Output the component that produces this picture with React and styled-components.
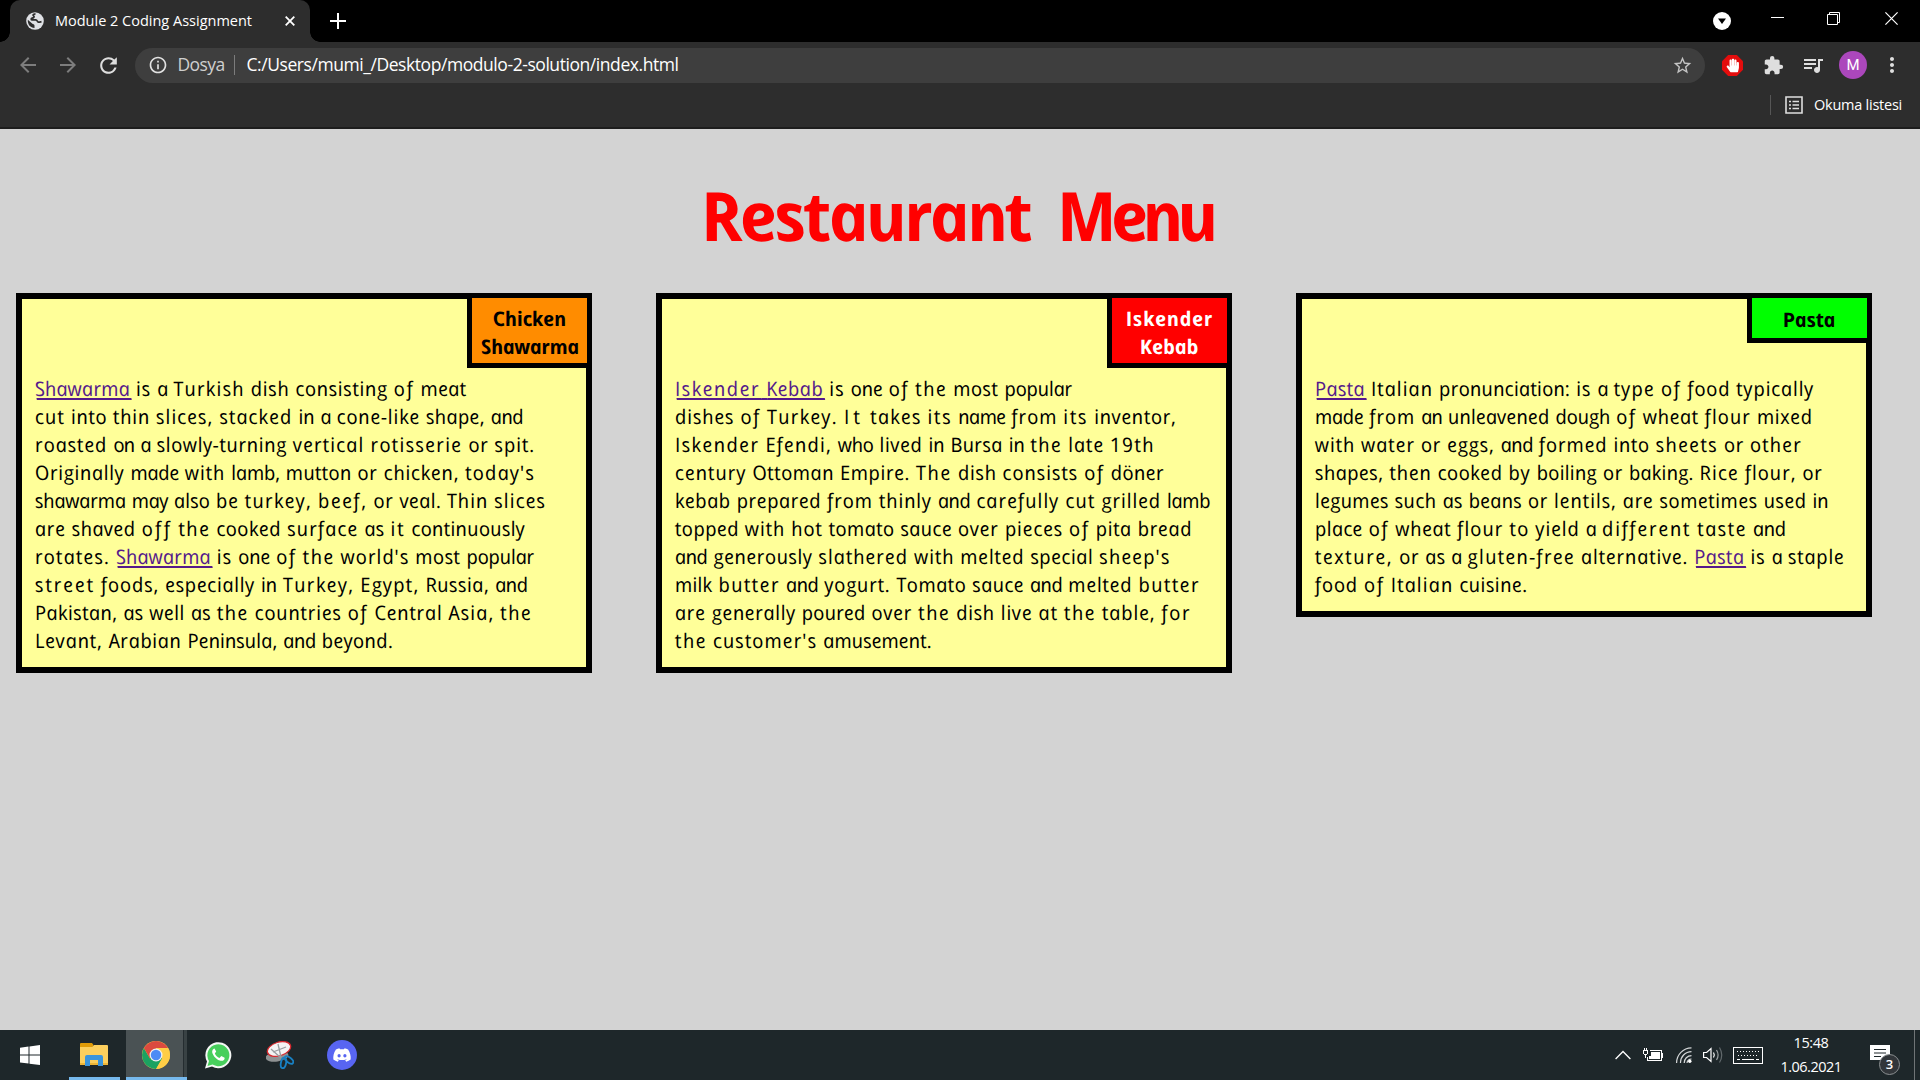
import React from "react";
import styled, { createGlobalStyle } from "styled-components";
import {
  MdArrowBack, MdArrowForward, MdRefresh, MdInfoOutline, MdStarBorder,
  MdExtension, MdQueueMusic, MdMoreVert,
} from "react-icons/md";
import { FaDiscord, FaHandPaper } from "react-icons/fa";

const HAND = '"Open Sans", "Noto Sans", sans-serif';
const UI = '"Open Sans", "Noto Sans", sans-serif';

const Global = createGlobalStyle`
  * { box-sizing: border-box; }
  html, body { margin: 0; background: #d3d3d3; }
  body { overflow: hidden; }
`;

/* Letter advances of the casual hand lettering, in 1/2048 em. */
const ADVANCE = {
  a: 1050, b: 1215, c: 1053, d: 1204, e: 1122, f: 1040, g: 1086, h: 1182, i: 575, j: 824,
  k: 1104, l: 562, m: 1588, n: 1071, o: 1079, p: 1094, q: 1065, r: 984, s: 997, t: 966,
  u: 1065, v: 996, w: 1398, x: 1210, y: 1066, z: 1104, " ": 612, "ö": 1079,
  A: 1498, B: 1290, C: 1234, D: 1478, E: 1277, I: 1119, K: 1249, L: 1128, M: 1809,
  O: 1635, P: 1067, R: 1287, S: 1421, T: 1392, ",": 567, ".": 510, "'": 795, "-": 853,
  ":": 735, 1: 1249, 9: 1249,
};
const advance = (text) => [...text].reduce((sum, ch) => sum + (ADVANCE[ch] || 1100), 0);

const ctx = document.createElement("canvas").getContext("2d");
const spacingFor = (text, width, font) => {
  ctx.font = font;
  return (width - ctx.measureText(text).width) / text.length;
};

/* ---------- Browser chrome ---------- */
const Screen = styled.div`
  width: 1920px;
  height: 1080px;
  display: flex;
  flex-direction: column;
  overflow: hidden;
  background: #d3d3d3;
  font-family: ${UI};
`;
const TabStrip = styled.div`
  height: 42px;
  flex: none;
  display: flex;
  background: #000;
  padding-left: 10px;
  color: #fff;
`;
const Tab = styled.div`
  width: 300px;
  height: 42px;
  display: flex;
  align-items: center;
  padding: 0 14px 0 16px;
  background: #2d2d2d;
  border-radius: 10px 10px 0 0;
  position: relative;
  &::before, &::after {
    content: "";
    position: absolute;
    bottom: 0;
    width: 10px;
    height: 10px;
  }
  &::before { left: -10px; background: radial-gradient(circle at 0 0, #000 9.5px, #2d2d2d 10px); }
  &::after { right: -10px; background: radial-gradient(circle at 100% 0, #000 9.5px, #2d2d2d 10px); }
`;
const Spacer = styled.div`
  flex: ${(p) => (p.$w ? `0 0 ${p.$w}px` : "1")};
`;
const Label = styled.span`
  flex: none;
  display: block;
  width: ${(p) => p.$w}px;
  font-size: ${(p) => p.$size}px;
  line-height: 1.36;
  color: ${(p) => p.$color || "#fff"};
  white-space: pre;
`;
const Glyph = styled.span`
  flex: none;
  display: flex;
  align-items: center;
  justify-content: center;
  width: ${(p) => p.$w}px;
  height: ${(p) => p.$h || p.$w}px;
  color: ${(p) => p.$color || "#fff"};
  margin-left: ${(p) => p.$ml || 0}px;
  svg { display: block; flex: none; }
`;
const WindowButtons = styled.div`
  display: flex;
  align-items: flex-start;
  padding: 12px 22px 0 0;
`;
const Toolbar = styled.div`
  height: 46px;
  flex: none;
  display: flex;
  align-items: center;
  background: #2d2d2d;
  padding: 0 17px 0 16px;
`;
const AddressBar = styled.div`
  flex: 0 0 1570px;
  height: 35px;
  display: flex;
  align-items: center;
  padding: 0 13px;
  border-radius: 18px;
  background: #3e3e3e;
  margin-left: 15px;
`;
const Divider = styled.i`
  width: 1px;
  height: 20px;
  background: ${(p) => p.$color || "#7c7c7c"};
`;
const Avatar = styled.span`
  flex: none;
  width: 28px;
  height: 28px;
  margin-left: 14px;
  border-radius: 50%;
  background: #ab47bc;
  color: #fff;
  display: grid;
  place-items: center;
  font: 15px Roboto, sans-serif;
`;
const Bookmarks = styled.div`
  height: 41px;
  flex: none;
  display: flex;
  align-items: center;
  justify-content: flex-end;
  padding: 0 18px 5px 0;
  background: #2d2d2d;
  border-bottom: 2px solid #1d1d1d;
`;

function Fit({ children, w, size, color, weight = 400 }) {
  return (
    <Label $w={w} $size={size} $color={color}
      style={{ letterSpacing: spacingFor(children, w, `${weight} ${size}px "Open Sans"`) }}>
      {children}
    </Label>
  );
}

/* ---------- Menu page ---------- */
const Page = styled.main`
  flex: 1;
  min-height: 0;
  background: #d3d3d3;
  font-family: ${HAND};
  color: #000;
`;
const Title = styled.h1`
  margin: 0;
  height: 164px;
  padding: 40px 0 0 2px;
  display: flex;
  justify-content: center;
  color: #f00;
  font-size: 68px;
  line-height: 92px;
  font-weight: 700;
`;
const Cards = styled.div`
  display: grid;
  grid-template-columns: repeat(3, 576px);
  column-gap: 64px;
  align-items: start;
  padding-left: 16px;
`;
const Card = styled.section`
  position: relative;
  border: 6px solid #000;
  background: #ff9;
  padding: 76px 8px 12px 12.5px;
`;
const Tag = styled.h2`
  position: absolute;
  top: -6px;
  right: -6px;
  width: 125px;
  margin: 0;
  border: 5px solid #000;
  background: ${(p) => p.$bg};
  color: ${(p) => p.$fg};
  padding: ${(p) => (p.$single ? "8px 0 4px" : "7px 0 2px")};
  font-size: 20px;
  line-height: 28px;
  font-weight: 700;
  display: flex;
  flex-direction: column;
  align-items: center;
`;
const Upright = styled.span`
  display: block;
  width: max-content;
  white-space: pre;
  font-style: italic;
  transform: skewX(12deg);
  transform-origin: 0 58%;
`;
const Line = styled(Upright)`
  height: 28px;
  font-size: 20px;
  line-height: 27px;
`;
const Link = styled.a`
  color: #551a8b;
  text-decoration: underline;
  text-decoration-thickness: 2px;
  text-underline-offset: 2px;
`;

function Word({ text, width, font }) {
  return <span style={{ letterSpacing: spacingFor(text, width, font) }}>{text}</span>;
}

const BODY_FONT = 'italic 400 20px "Open Sans"';
const TITLE_FONT = 'italic 700 68px "Open Sans"';

function TextLine({ width, text }) {
  const parts = text.split(/(\[[^\]]+\])/).filter(Boolean);
  const scale = width / advance(text.replace(/[[\]]/g, ""));
  const words = (s) =>
    s.split(/( )/).filter(Boolean).map((w, i) => (
      <Word key={i} text={w} width={advance(w) * scale} font={BODY_FONT} />
    ));
  return (
    <Line>
      {parts.map((p, i) => (p[0] === "[" ? <Link key={i}>{words(p.slice(1, -1))}</Link> : <React.Fragment key={i}>{words(p)}</React.Fragment>))}
    </Line>
  );
}

const MENU = [
  {
    tag: [["Chicken", 73], ["Shawarma", 98]], bg: "#ff8c00", fg: "#000",
    lines: [
      [431.5, "[Shawarma] is a Turkish dish consisting of meat"],
      [488, "cut into thin slices, stacked in a cone-like shape, and"],
      [500, "roasted on a slowly-turning vertical rotisserie or spit."],
      [500, "Originally made with lamb, mutton or chicken, today's"],
      [511, "shawarma may also be turkey, beef, or veal. Thin slices"],
      [490, "are shaved off the cooked surface as it continuously"],
      [499, "rotates. [Shawarma] is one of the world's most popular"],
      [492.5, "street foods, especially in Turkey, Egypt, Russia, and"],
      [497, "Pakistan, as well as the countries of Central Asia, the"],
      [358, "Levant, Arabian Peninsula, and beyond."],
    ],
  },
  {
    tag: [["Iskender", 87], ["Kebab", 58.5]], bg: "#f00", fg: "#fff",
    lines: [
      [397, "[Iskender Kebab] is one of the most popular"],
      [501.5, "dishes of Turkey. It takes its name from its inventor,"],
      [480, "Iskender Efendi, who lived in Bursa in the late 19th"],
      [489, "century Ottoman Empire. The dish consists of döner"],
      [535, "kebab prepared from thinly and carefully cut grilled lamb"],
      [517, "topped with hot tomato sauce over pieces of pita bread"],
      [495.5, "and generously slathered with melted special sheep's"],
      [525, "milk butter and yogurt. Tomato sauce and melted butter"],
      [516.5, "are generally poured over the dish live at the table, for"],
      [256.5, "the customer's amusement."],
    ],
  },
  {
    tag: [["Pasta", 52.5]], bg: "#0f0", fg: "#000",
    lines: [
      [499, "[Pasta] Italian pronunciation: is a type of food typically"],
      [497.5, "made from an unleavened dough of wheat flour mixed"],
      [487, "with water or eggs, and formed into sheets or other"],
      [507.5, "shapes, then cooked by boiling or baking. Rice flour, or"],
      [513.5, "legumes such as beans or lentils, are sometimes used in"],
      [470.5, "place of wheat flour to yield a different taste and"],
      [529.5, "texture, or as a gluten-free alternative. [Pasta] is a staple"],
      [212.5, "food of Italian cuisine."],
    ],
  },
];

/* ---------- Taskbar ---------- */
const Taskbar = styled.footer`
  height: 50px;
  flex: none;
  display: flex;
  align-items: stretch;
  background: #1e272a;
`;
const TaskButton = styled.div`
  width: ${(p) => p.$w}px;
  margin-left: ${(p) => p.$ml || 0}px;
  display: flex;
  align-items: center;
  justify-content: center;
  background: ${(p) => (p.$active ? "linear-gradient(90deg, #4a5254 57px, #252d30 57px, #252d30 58px, #394244 58px)" : "none")};
  border-bottom: 3px solid ${(p) => (p.$open ? "#76b9ed" : "transparent")};
  padding-right: ${(p) => (p.$active || p.$open ? 2 : 0)}px;
  padding-top: 3px;
`;
const Tray = styled.div`
  display: flex;
  align-items: center;
  margin-left: auto;
`;
const Clock = styled.div`
  width: 62px;
  margin-left: 17px;
  display: flex;
  flex-direction: column;
  align-items: center;
  gap: 4px;
`;
const Notice = styled.div`
  position: relative;
  width: 30px;
  height: 30px;
  margin: 10px 14px 0 28px;
`;
const Count = styled.span`
  position: absolute;
  left: 9px;
  top: 9px;
  width: 21px;
  height: 21px;
  border: 1px solid #8b8f91;
  border-radius: 50%;
  background: #32363a;
  color: #fff;
  font: 600 13px/19px ${UI};
  text-align: center;
`;
const NoteIcon = styled.svg`
  display: block;
`;
const ShowDesktop = styled.div`
  width: 6px;
  height: 50px;
  border-left: 1px solid #6f7476;
`;

const Globe = () => (
  <svg width="18" height="18" viewBox="0 0 18 18">
    <circle cx="9" cy="9" r="8.800" fill="#dfe1e5" />
    <path d="M9.500 1.800C6.800 2 6.500 3.200 7.800 4.200c.8.700-.2 1.600-1.700 1.900-1.300.3-1.200 1.700.2 1.800h3.400c1.800.2 1.400 1.900 2.700 2.200 1.200.3 1.700-.1 3.100-.5" fill="none" stroke="#2d2d2d" strokeWidth="1.700" />
    <path d="M1.800 7.800l4.300 3.600c.8.700 2.400.7 2.400 2v2.600C4.500 16 1.500 12.600 1.800 7.800z" fill="#2d2d2d" />
  </svg>
);
const Explorer = () => (
  <svg width="28" height="24" viewBox="0 0 28 24">
    <path d="M0 1q0-1 1-1h11l1.500 2L12 5H0z" fill="#e09b07" />
    <path d="M0 4h12l2-2h13q1 0 1 1v19H0z" fill="#fccf5d" />
    <path d="M0 20h28v2H0z" fill="#eeb637" />
    <path d="M5 23V14q0-2 2-2h14q2 0 2 2v9h-5v-6h-8v6z" fill="#3a94dc" />
  </svg>
);
const Chrome = () => (
  <svg width="28" height="28" viewBox="0 0 28 28">
    <circle cx="14" cy="14" r="14" fill="#ffcd46" />
    <path d="M14 14L8 17.500 1.900 7A14 14 0 0 0 14 28l6-10.500z" fill="#1ba261" />
    <path d="M14 14l-6 3.500L1.900 7A14 14 0 0 1 26.100 7H14z" fill="#db4a3f" />
    <path d="M14 28l6.100-10.500L14 14l-6 3.500" fill="#1ba261" />
    <path d="M14 7h12.100A14 14 0 0 1 14 28l6-10.500z" fill="#ffcd46" />
    <circle cx="14" cy="14" r="6.500" fill="#f1f1f1" />
    <circle cx="14" cy="14" r="5.200" fill="#4c8bf5" />
  </svg>
);
const Whatsapp = () => (
  <svg width="28" height="28" viewBox="0 0 28 28">
    <path d="M1 27.500l2-7A13 13 0 1 1 8 25.500z" fill="#f5f7f5" />
    <path d="M3.500 25l1.500-5A11 11 0 1 1 8.600 23.600z" fill="#47cf5c" />
    <path d="M10.500 7.500c-2 .5-3 2.800-1.700 5.500 1.500 3.400 4.400 6 7.800 6.800 2.500.4 4.400-1.200 4-3.100l-3.300-1.700-1.800 1.900c-2.200-.9-3.700-2.400-4.700-4.500l1.400-1.800z" fill="#fff" />
  </svg>
);
const Snip = () => (
  <svg width="28" height="28" viewBox="0 0 28 28">
    <ellipse cx="11" cy="15.500" rx="11.500" ry="5" fill="#8f9293" transform="rotate(-8 11 15.500)" />
    <ellipse cx="13" cy="8" rx="12" ry="6.800" fill="#f4f4f4" stroke="#d8292f" strokeWidth="1.300" transform="rotate(-17 13 8)" />
    <path d="M7 11l13-5M5 8l10 9M12 3l3 13" stroke="#9a9da0" strokeWidth="1.300" />
    <g fill="none" stroke="#1880c3" strokeWidth="1.800">
      <ellipse cx="17.500" cy="22" rx="2.600" ry="5.300" transform="rotate(12 17.500 22)" />
      <ellipse cx="23" cy="19" rx="2.600" ry="5" transform="rotate(-52 23 19)" />
    </g>
  </svg>
);
const HandStop = () => (
  <Glyph $w={21} $ml={17}>
    <svg width="21" height="21" viewBox="0 0 21 21">
      <path d="M6.200 0h8.600L21 6.200v8.600L14.800 21H6.200L0 14.800V6.200z" fill="#e40d0d" />
      <FaHandPaper x="3.800" y="3.500" size={14} color="#fff" />
    </svg>
  </Glyph>
);

export default function App() {
  return (
    <Screen>
      <Global />
      <TabStrip>
        <Tab>
          <Glyph $w={18}><Globe /></Glyph>
          <Spacer $w={11} />
          <Fit w={197} size={14.5}>Module 2 Coding Assignment</Fit>
          <Spacer />
          <Glyph $w={12}>
            <svg width="10" height="10" viewBox="0 0 10 10"><path d="M.7.7l8.600 8.600M9.300.7L.7 9.300" stroke="#fff" strokeWidth="1.800" /></svg>
          </Glyph>
        </Tab>
        <Glyph $w={16} $h={42} $ml={19.5}>
          <svg width="16" height="16" viewBox="0 0 16 16"><path d="M8 0v16M0 8h16" stroke="#fff" strokeWidth="2" /></svg>
        </Glyph>
        <Spacer />
        <WindowButtons>
          <Glyph $w={18}>
            <svg width="18" height="18" viewBox="0 0 18 18"><circle cx="9" cy="9" r="9" fill="#fff" /><path d="M5 6.500h8L9 12z" fill="#000" /></svg>
          </Glyph>
          <Glyph $w={13} $ml={40}>
            <svg width="13" height="13" viewBox="0 0 13 13"><path d="M0 5.500h13" stroke="#fff" /></svg>
          </Glyph>
          <Glyph $w={13} $ml={43}>
            <svg width="13" height="13" viewBox="0 0 13 13"><path d="M.5 2.500h10v10H.5zM2.500 2.500v-2h10v10h-2" fill="none" stroke="#fff" /></svg>
          </Glyph>
          <Glyph $w={13} $ml={45}>
            <svg width="13" height="13" viewBox="0 0 13 13"><path d="M.4.4l12.200 12.200M12.600.4L.4 12.600" stroke="#fff" strokeWidth="1.200" /></svg>
          </Glyph>
        </WindowButtons>
      </TabStrip>
      <Toolbar>
        <Glyph $w={24} $color="#7d7d7d"><MdArrowBack size={24} /></Glyph>
        <Glyph $w={24} $ml={16} $color="#7d7d7d"><MdArrowForward size={24} /></Glyph>
        <Glyph $w={24} $ml={16} $color="#dedede"><MdRefresh size={25} /></Glyph>
        <AddressBar>
          <Glyph $w={19} $color="#e2e2e2"><MdInfoOutline size={20} /></Glyph>
          <Spacer $w={10.5} />
          <Fit w={47} size={17.5} color="#cfcfcf">Dosya</Fit>
          <Spacer $w={9} />
          <Divider />
          <Spacer $w={12} />
          <Fit w={432} size={17.5}>C:/Users/mumi_/Desktop/modulo-2-solution/index.html</Fit>
          <Spacer />
          <Glyph $w={20} $color="#c4c4c4"><MdStarBorder size={21} /></Glyph>
        </AddressBar>
        <HandStop />
        <Glyph $w={20} $ml={20} $color="#dedede"><MdExtension size={21} /></Glyph>
        <Glyph $w={24} $ml={18} $color="#dedede"><MdQueueMusic size={24} /></Glyph>
        <Avatar>M</Avatar>
        <Glyph $w={22} $ml={14} $color="#dedede"><MdMoreVert size={24} /></Glyph>
      </Toolbar>
      <Bookmarks>
        <Divider $color="#565656" />
        <Glyph $w={18} $ml={14}>
          <svg width="18" height="18" viewBox="0 0 18 18">
            <path d="M1 1h16v16H1z" fill="none" stroke="#dedede" strokeWidth="1.600" />
            <path d="M4 5.500h2M4 9h2M4 12.500h2M7.500 5.500H14M7.500 9H14M7.500 12.500H14" stroke="#dedede" strokeWidth="1.600" />
          </svg>
        </Glyph>
        <Spacer $w={11} />
        <Fit w={88} size={14.5}>Okuma listesi</Fit>
      </Bookmarks>

      <Page>
        <Title>
          <Upright>
            <Word text="Restaurant" width={329} font={TITLE_FONT} />
            <Word text=" " width={27} font={TITLE_FONT} />
            <Word text="Menu" width={155} font={TITLE_FONT} />
          </Upright>
        </Title>
        <Cards>
          {MENU.map((m) => (
            <Card key={m.tag[0][0]}>
              <Tag $bg={m.bg} $fg={m.fg} $single={m.tag.length === 1}>
                {m.tag.map(([t, w]) => (
                  <Upright key={t}><Word text={t} width={w} font='italic 700 20px "Open Sans"' /></Upright>
                ))}
              </Tag>
              {m.lines.map(([w, t]) => <TextLine key={t} width={w} text={t} />)}
            </Card>
          ))}
        </Cards>
      </Page>

      <Taskbar>
        <TaskButton $w={60}>
          <svg width="20" height="20" viewBox="0 0 20 20"><path d="M0 2.800l8.500-1.200v8H0zM9.500 1.400L20 0v9.600H9.500zM0 10.600h8.500v8L0 17.400zM9.500 10.600H20V20L9.500 18.700z" fill="#fff" /></svg>
        </TaskButton>
        <TaskButton $w={51} $ml={9} $open><Explorer /></TaskButton>
        <TaskButton $w={61} $ml={6} $open $active><Chrome /></TaskButton>
        <TaskButton $w={61}><Whatsapp /></TaskButton>
        <TaskButton $w={64}><Snip /></TaskButton>
        <TaskButton $w={60}>
          <svg width="30" height="30" viewBox="0 0 30 30"><circle cx="15" cy="15" r="15" fill="#5865f2" /><FaDiscord x="5.500" y="5.500" size={19} color="#fff" /></svg>
        </TaskButton>
        <Tray>
          <Glyph $w={16} $h={10}>
            <svg width="16" height="10" viewBox="0 0 16 10"><path d="M.6 9L8 1.500 15.400 9" fill="none" stroke="#fff" strokeWidth="1.300" /></svg>
          </Glyph>
          <Glyph $w={20} $h={14} $ml={12}>
            <svg width="20" height="14" viewBox="0 0 20 14" shapeRendering="crispEdges">
              <path d="M7 2.500h11.500v10h-14V9M19.500 5v5" fill="none" stroke="#fff" />
              <path d="M8 4h9v7H6V8h2z" fill="#fff" />
              <path d="M.5 2.500h4v3l-1 1h-2l-1-1zM1.500 0v2M3.500 0v2M2.500 6v4" fill="none" stroke="#fff" />
            </svg>
          </Glyph>
          <Glyph $w={16} $ml={13}>
            <svg width="16" height="16" viewBox="0 0 16 16"><g fill="none" stroke="#d5d8d9" strokeWidth="1.200"><path d="M.6 16A15 15 0 0 1 15.500.8M4.500 16A11 11 0 0 1 15.500 4.600M8.200 16a7.300 7.300 0 0 1 7.300-7.400M11 16a4.500 4.500 0 0 1 4.500-4" /></g><circle cx="13.800" cy="14.300" r="1.700" fill="#fff" /></svg>
          </Glyph>
          <Glyph $w={20} $h={18} $ml={11}>
            <svg width="20" height="18" viewBox="0 0 20 18" fill="none"><path d="M.6 6.500h3L8 2.500v13l-4.400-4h-3z" stroke="#fff" strokeWidth="1.200" /><path d="M10.500 6.500q1.600 2.500 0 5" stroke="#fff" strokeWidth="1.200" /><path d="M13.500 4q3.200 5 0 10" stroke="#9ba0a2" strokeWidth="1.200" /><path d="M16.500 1.500q4.500 7.500 0 15" stroke="#62696c" strokeWidth="1.200" /></svg>
          </Glyph>
          <Glyph $w={30} $h={17} $ml={10}>
            <svg width="30" height="17" viewBox="0 0 30 17" fill="none" stroke="#fff" shapeRendering="crispEdges"><path d="M.5.5h29v16H.5z" /><path d="M4 4.500h22M5 8.500h21" strokeDasharray="1 2" /><path d="M4 12.500h3M9 12.500h12M23 12.500h3" /></svg>
          </Glyph>
          <Clock>
            <Fit w={35} size={14.5}>15:48</Fit>
            <Fit w={61} size={14.5}>1.06.2021</Fit>
          </Clock>
          <Notice>
            <NoteIcon width="20" height="19" viewBox="0 0 20 19"><path d="M0 0h20v15h-6v3.500L10.500 15H0z" fill="#fff" /><path d="M4 4.500h12M4 8h12M4 11.500h7" stroke="#1e272a" /></NoteIcon>
            <Count>3</Count>
          </Notice>
          <ShowDesktop />
        </Tray>
      </Taskbar>
    </Screen>
  );
}
